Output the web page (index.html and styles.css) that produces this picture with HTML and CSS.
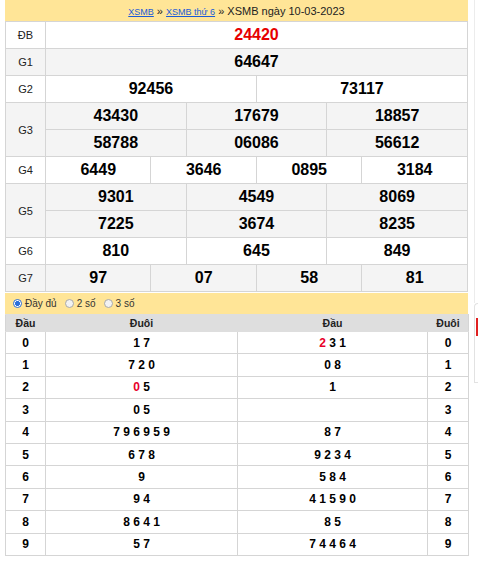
FILE: index.html
```html
<!DOCTYPE html>
<html lang="vi">
<head>
<meta charset="utf-8">
<title>XSMB ngày 10-03-2023</title>
<link rel="stylesheet" href="styles.css">
</head>
<body>
<div class="page">
  <main class="main">
    <div class="crumb"><a href="#">XSMB</a> » <a href="#">XSMB thứ 6</a> » XSMB ngày 10-03-2023</div>
    <table class="kq">
      <colgroup><col class="c-label"><col span="12"></colgroup>
      <tr><td class="lb">ĐB</td><td colspan="12" class="db">24420</td></tr>
      <tr class="g"><td class="lb">G1</td><td colspan="12">64647</td></tr>
      <tr><td class="lb">G2</td><td colspan="6">92456</td><td colspan="6">73117</td></tr>
      <tr class="g"><td class="lb" rowspan="2">G3</td><td colspan="4">43430</td><td colspan="4">17679</td><td colspan="4">18857</td></tr>
      <tr class="g"><td colspan="4">58788</td><td colspan="4">06086</td><td colspan="4">56612</td></tr>
      <tr><td class="lb">G4</td><td colspan="3">6449</td><td colspan="3">3646</td><td colspan="3">0895</td><td colspan="3">3184</td></tr>
      <tr class="g"><td class="lb" rowspan="2">G5</td><td colspan="4">9301</td><td colspan="4">4549</td><td colspan="4">8069</td></tr>
      <tr class="g"><td colspan="4">7225</td><td colspan="4">3674</td><td colspan="4">8235</td></tr>
      <tr><td class="lb">G6</td><td colspan="4">810</td><td colspan="4">645</td><td colspan="4">849</td></tr>
      <tr class="g"><td class="lb">G7</td><td colspan="3">97</td><td colspan="3">07</td><td colspan="3">58</td><td colspan="3">81</td></tr>
    </table>
    <div class="opts">
      <label class="opt"><input type="radio" name="mode" checked> Đầy đủ</label>
      <label class="opt"><input type="radio" name="mode"> 2 số</label>
      <label class="opt"><input type="radio" name="mode"> 3 số</label>
    </div>
    <table class="loto">
      <colgroup><col class="l1"><col class="l2"><col class="l3"><col class="l4"></colgroup>
      <tr class="hd"><th>Đầu</th><th>Đuôi</th><th>Đầu</th><th>Đuôi</th></tr>
      <tr><td>0</td><td>1 7</td><td><span class="hl">2</span> 3 1</td><td>0</td></tr>
      <tr><td>1</td><td>7 2 0</td><td>0 8</td><td>1</td></tr>
      <tr><td>2</td><td><span class="hl">0</span> 5</td><td>1</td><td>2</td></tr>
      <tr><td>3</td><td>0 5</td><td></td><td>3</td></tr>
      <tr><td>4</td><td>7 9 6 9 5 9</td><td>8 7</td><td>4</td></tr>
      <tr><td>5</td><td>6 7 8</td><td>9 2 3 4</td><td>5</td></tr>
      <tr><td>6</td><td>9</td><td>5 8 4</td><td>6</td></tr>
      <tr><td>7</td><td>9 4</td><td>4 1 5 9 0</td><td>7</td></tr>
      <tr><td>8</td><td>8 6 4 1</td><td>8 5</td><td>8</td></tr>
      <tr><td>9</td><td>5 7</td><td>7 4 4 6 4</td><td>9</td></tr>
    </table>
  </main>
  <aside class="side">
    <div class="side-top"></div>
    <div class="side-box"><div class="side-red"></div></div>
  </aside>
</div>
</body>
</html>
```

FILE: styles.css
```css
* { box-sizing: border-box; }
body {
  margin: 0;
  font-family: "Liberation Sans", Arial, sans-serif;
  color: #000;
  background: #fff;
}
.page { display: flex; align-items: flex-start; }
.main { width: 463px; margin-left: 5px; flex: none; }

.crumb {
  height: 21px;
  background: #ffe597;
  text-align: center;
  font-size: 11px;
  line-height: 22px;
  color: #222;
}
.crumb a { font-size: 9px; color: #1a5bd8; text-decoration: underline; }

table { border-collapse: collapse; width: 463px; table-layout: fixed; }

.kq .c-label { width: 40px; }
.kq td {
  border: 1px solid #d5d5d5;
  height: 27px;
  padding: 0;
  text-align: center;
  font-weight: bold;
  font-size: 16px;
  background: #fff;
}
.kq tr.g td { background: #f4f4f4; }
.kq td.lb { font-weight: normal; font-size: 11px; color: #222; }
.kq td.db { color: #e60000; }

.opts {
  height: 21px;
  margin-top: 1px;
  background: #ffe597;
  display: flex;
  align-items: center;
  padding-left: 8px;
  gap: 8px;
  font-size: 10px;
  color: #333;
}
.opt { display: flex; align-items: center; gap: 3px; }
.opt input {
  appearance: none;
  -webkit-appearance: none;
  margin: 0;
  width: 9px;
  height: 9px;
  border-radius: 50%;
  border: 1px solid #a9a9a9;
  background: #f2f2f2;
}
.opt input:checked {
  border-color: #2a6fdb;
  background: radial-gradient(circle, #2a6fdb 0 2.2px, #fff 2.8px);
}

.loto .l1 { width: 40px; }
.loto .l2 { width: 192px; }
.loto .l3 { width: 190px; }
.loto .l4 { width: 41px; }
.loto th {
  background: #dedede;
  height: 17px;
  padding: 0;
  font-size: 10.5px;
  font-weight: bold;
  color: #222;
  border: 1px solid #dedede;
  border-left-color: #d5d5d5;
}
.loto th + th { border-left-color: #dedede; }
.loto th:last-child { border-right-color: #d5d5d5; }
.loto td {
  border: 1px solid #d5d5d5;
  height: 22.4px;
  padding: 0;
  text-align: center;
  font-size: 12px;
  font-weight: bold;
}
.loto .hl { color: #e8002a; }

.side { flex: 1; margin-left: 6px; }
.side-top { height: 303px; border-left: 1px solid #ececec; }
.side-box {
  height: 80px;
  border: 1px solid #e2e2e2;
  border-right: 0;
  border-radius: 5px 0 0 0;
  padding: 14px 0 0 1px;
}
.side-red { height: 18px; background: #e02020; }
```
